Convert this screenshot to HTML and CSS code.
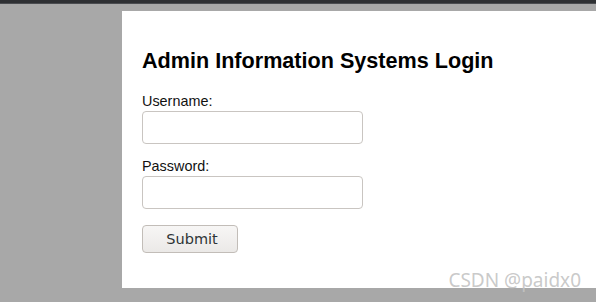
FILE: index.html
```html
<!DOCTYPE html>
<html lang="en">
<head>
    <meta charset="UTF-8">
    <meta name="viewport" content="width=device-width, initial-scale=1.0">
    <title>Admin Login</title>
    <link rel="stylesheet" href="styles.css">
</head>
<body>
    <div class="topbar"></div>
    <div class="page">
        <div class="card">
            <h1>Admin Information Systems Login</h1>
            <form class="login" onsubmit="return false">
                <label for="username">Username:</label>
                <input id="username" type="text">
                <label for="password">Password:</label>
                <input id="password" type="password">
                <button type="submit">Submit</button>
            </form>
        </div>
    </div>
    <div class="watermark">CSDN @paidx0</div>
</body>
</html>
```

FILE: styles.css
```css
body {
    font-family: "Liberation Sans", Arial, sans-serif;
    margin: 0;
    background: #a8a8a8;
    height: 302px;
    overflow: hidden;
}
.topbar {
    height: 3px;
    background: #2e3033;
    border-bottom: 1px solid #4a4c50;
}
.page {
    padding: 7px 0 0 122px;
}
.card {
    background: #fff;
    height: 237px;
    padding: 20px;
}
h1 {
    font-size: 21.6px;
    margin: 17px 0 19px 0;
    color: #000;
}
.login {
    display: flex;
    flex-direction: column;
    align-items: flex-start;
}
.login label {
    font-size: 14.4px;
    color: #111;
    margin-bottom: 2px;
}
.login input {
    width: 221px;
    height: 33px;
    box-sizing: border-box;
    border: 1px solid #c9c5c1;
    border-radius: 4px;
    margin-bottom: 14px;
    padding: 0 6px;
}
.login button {
    width: 96px;
    height: 28px;
    margin-top: 2px;
    border: 1px solid #c2bdb8;
    border-radius: 4px;
    background: linear-gradient(#f7f6f5, #ebe9e7);
    font-family: "DejaVu Sans", sans-serif;
    font-size: 14.5px;
    color: #2e3436;
    padding: 0 0 0 4px;
}
.watermark {
    position: absolute;
    right: 15px;
    top: 267px;
    font-family: "Noto Sans", sans-serif;
    font-size: 19px;
    color: rgba(195, 195, 195, 0.9);
}
```
